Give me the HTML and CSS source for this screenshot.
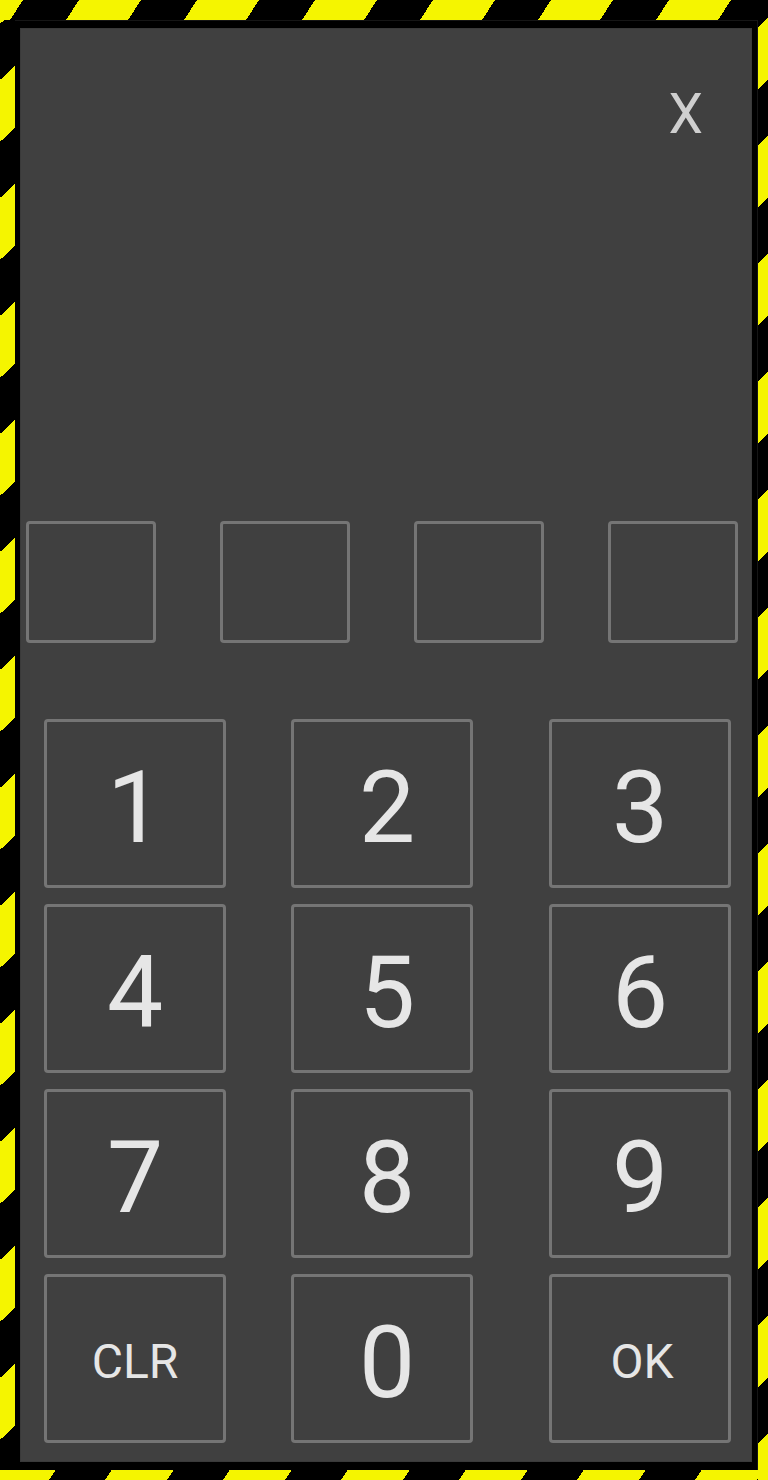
FILE: index.html
```html
<!DOCTYPE html>
<html lang="en">
<head>
<meta charset="utf-8">
<title>PIN pad</title>
<link rel="stylesheet" href="styles.css">
</head>
<body>
<div class="hazard">
  <div class="frame">
    <div class="panel">
      <div class="close-row">
        <button class="close" type="button">X</button>
      </div>
      <div class="pin-row">
        <div class="pin-box"></div>
        <div class="pin-box"></div>
        <div class="pin-box"></div>
        <div class="pin-box"></div>
      </div>
      <div class="keypad">
        <button class="key digit" type="button">1</button>
        <button class="key digit mid" type="button">2</button>
        <button class="key digit" type="button">3</button>
        <button class="key digit" type="button">4</button>
        <button class="key digit mid" type="button">5</button>
        <button class="key digit" type="button">6</button>
        <button class="key digit" type="button">7</button>
        <button class="key digit mid" type="button">8</button>
        <button class="key digit" type="button">9</button>
        <button class="key word" type="button">CLR</button>
        <button class="key digit mid" type="button">0</button>
        <button class="key word ok" type="button">OK</button>
      </div>
    </div>
  </div>
</div>
</body>
</html>
```
FILE: styles.css
```css
html, body {
  margin: 0;
  padding: 0;
  background: #000;
}

body {
  font-family: Roboto, "Noto Sans", "Liberation Sans", sans-serif;
}

.hazard {
  width: 768px;
  height: 1480px;
  box-sizing: border-box;
  padding: 20px 10px 10px 15px;
  background-color: #000;
  background-image:
    linear-gradient(123deg, transparent 10.9px, #f5f500 10.9px, #f5f500 62.9px, transparent 62.9px),
    linear-gradient(123deg, transparent 5.46px, #f5f500 5.46px, #f5f500 57.45px, transparent 57.45px),
    linear-gradient(137deg, transparent 10.2px, #f5f500 10.2px, #f5f500 55.5px, transparent 55.5px),
    linear-gradient(135deg, transparent 7.07px, #f5f500 7.07px, #f5f500 50.9px, transparent 50.9px);
  background-size:
    118px 20px,
    118px 10px,
    15px 118px,
    10px 118px;
  background-position:
    66px 0,
    105px 1470px,
    0 66px,
    758px 18px;
  background-repeat:
    repeat-x,
    repeat-x,
    repeat-y,
    repeat-y;
}

.frame {
  height: 100%;
  box-sizing: border-box;
  background: #000;
  border-top: 1px solid #161616;
  border-right: 1px solid #161616;
  padding: 7px 5px 8px 5px;
}

.panel {
  height: 100%;
  box-sizing: border-box;
  background: #404040;
  border: 1px solid #3a3a3a;
}

.close-row {
  display: flex;
  justify-content: flex-end;
  padding-top: 58px;
  padding-right: 48px;
}

.close {
  background: none;
  border: 0;
  padding: 0;
  margin: 0;
  font-family: Roboto, "Noto Sans", sans-serif;
  font-size: 55px;
  line-height: 1;
  color: #cfcfcf;
}

.pin-row {
  display: flex;
  justify-content: space-between;
  margin-top: 379px;
  padding: 0 13px 0 5px;
}

.pin-box {
  width: 130px;
  height: 122px;
  box-sizing: border-box;
  border: 3px solid #757575;
  border-radius: 4px;
}

.keypad {
  display: grid;
  grid-template-columns: 247px 258px 182px;
  grid-auto-rows: 169px;
  row-gap: 16px;
  margin-top: 76px;
  padding-left: 23px;
}

.key {
  width: 182px;
  height: 169px;
  box-sizing: border-box;
  margin: 0;
  background: transparent;
  border: 3px solid #757575;
  border-radius: 4px;
  color: #e6e6e6;
  font-family: Roboto, "Noto Sans", sans-serif;
  line-height: 1;
  display: flex;
  align-items: center;
  justify-content: center;
}

.digit {
  font-size: 100px;
  padding: 9px 0 0 0;
}

.word {
  font-size: 48px;
  padding: 7px 0 0 0;
}

.mid {
  padding-left: 10px;
}

.ok {
  padding-left: 4px;
}
```
